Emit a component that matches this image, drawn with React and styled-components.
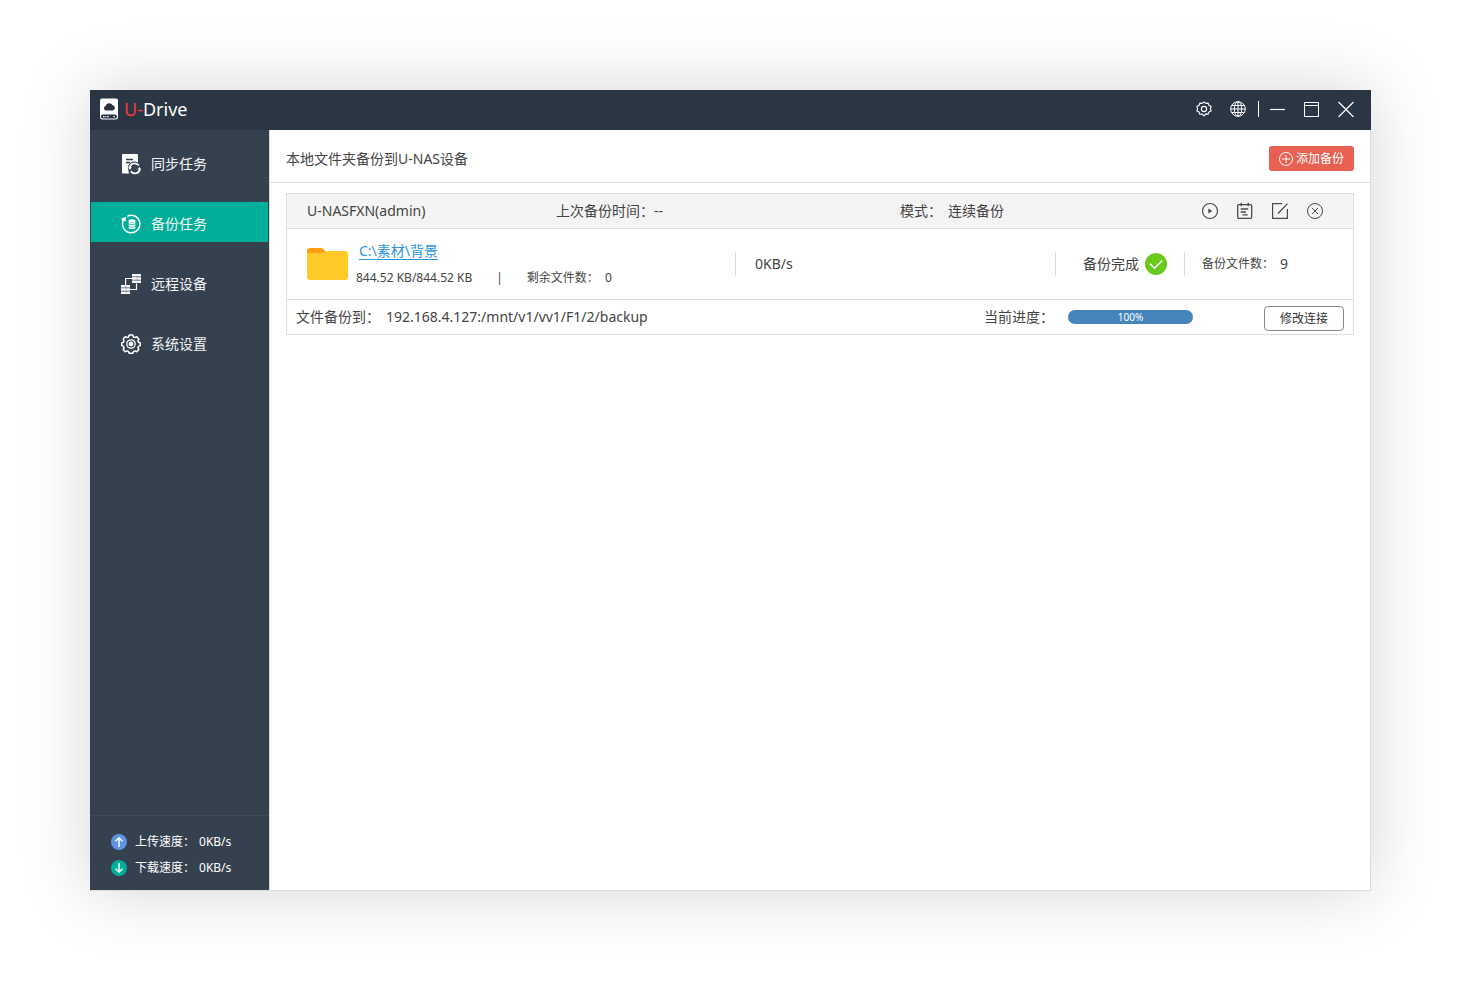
import styled, { createGlobalStyle } from "styled-components";

const menu = [
  { label: "同步任务", icon: <SyncIcon /> },
  { label: "备份任务", icon: <BackupIcon />, active: true },
  { label: "远程设备", icon: <DevicesIcon /> },
  { label: "系统设置", icon: <SettingsIcon /> },
];

const task = {
  device: "U-NASFXN(admin)",
  lastTime: "--",
  mode: "连续备份",
  source: "C:\\素材\\背景",
  size: "844.52 KB/844.52 KB",
  remaining: 0,
  speed: "0KB/s",
  files: 9,
  target: "192.168.4.127:/mnt/v1/vv1/F1/2/backup",
  progress: 100,
};

export default function App() {
  return (
    <>
      <GlobalStyle />
      <Desktop>
        <Window>
          <TitleBar />
          <Body>
            <Sidebar />
            <Main>
              <MainHeader>
                <h1>本地文件夹备份到U-NAS设备</h1>
                <AddButton type="button">
                  <AddIcon />
                  添加备份
                </AddButton>
              </MainHeader>
              <TaskList>
                <TaskCard {...task} />
              </TaskList>
            </Main>
          </Body>
        </Window>
      </Desktop>
    </>
  );
}

function TitleBar() {
  return (
    <TitleBarStyled>
      <LogoIcon />
      <Brand>
        <span>U-</span>Drive
      </Brand>
      <WindowActions>
        <IconButton type="button" aria-label="设置">
          <CogIcon />
        </IconButton>
        <IconButton type="button" aria-label="语言">
          <GlobeIcon />
        </IconButton>
        <WindowControls>
          <IconButton type="button" aria-label="最小化">
            <svg width="16" height="16" stroke="#fff">
              <path d="M0 8.500h15" strokeWidth="1.200" />
            </svg>
          </IconButton>
          <IconButton type="button" aria-label="最大化">
            <svg width="16" height="16" fill="none" stroke="#fff">
              <path d="M.5 1.500h14v14H.5zM.5 4.500h14" />
            </svg>
          </IconButton>
          <IconButton type="button" aria-label="关闭">
            <svg width="16" height="16" stroke="#fff">
              <path d="M.5 1l15 15M15.500 1l-15 15" strokeWidth="1.200" />
            </svg>
          </IconButton>
        </WindowControls>
      </WindowActions>
    </TitleBarStyled>
  );
}

function Sidebar() {
  return (
    <SidebarStyled>
      <nav>
        {menu.map(({ label, icon, active }) => (
          <MenuItem href="#" key={label} $active={active}>
            {icon}
            {label}
          </MenuItem>
        ))}
      </nav>
      <Speeds>
        <Speed>
          <ArrowIcon color="#5f93e4" path="M8 13V4M4.500 7.300L8 3.800l3.500 3.500" />
          上传速度：<span>0KB/s</span>
        </Speed>
        <Speed>
          <ArrowIcon color="#00ae99" path="M8 3v9M4.500 8.700L8 12.200l3.500-3.500" />
          下载速度：<span>0KB/s</span>
        </Speed>
      </Speeds>
    </SidebarStyled>
  );
}

function TaskCard(props) {
  return (
    <Card>
      <CardHead>
        <span>{props.device}</span>
        <span>上次备份时间：{props.lastTime}</span>
        <Pair>
          <span>模式：</span>
          <span>{props.mode}</span>
        </Pair>
        <CardActions>
          <IconButton type="button" aria-label="开始">
            <PlayIcon />
          </IconButton>
          <IconButton type="button" aria-label="日志">
            <LogIcon />
          </IconButton>
          <IconButton type="button" aria-label="编辑">
            <EditIcon />
          </IconButton>
          <IconButton type="button" aria-label="删除">
            <RemoveIcon />
          </IconButton>
        </CardActions>
      </CardHead>

      <CardBody>
        <Source>
          <FolderIcon />
          <div>
            <a href="#">{props.source}</a>
            <Details>
              <span>{props.size}</span>
              <span>|</span>
              <Pair>
                <span>剩余文件数：</span>
                <span>{props.remaining}</span>
              </Pair>
            </Details>
          </div>
        </Source>
        <Cell $indent={19}>{props.speed}</Cell>
        <Cell $indent={27}>
          备份完成
          <DoneIcon />
        </Cell>
        <Cell $indent={17}>
          <small>备份文件数：</small>
          {props.files}
        </Cell>
      </CardBody>

      <CardFoot>
        <Pair>
          <span>文件备份到：</span>
          <span>{props.target}</span>
        </Pair>
        <ProgressGroup>
          <span id="progress-label">当前进度：</span>
          <Track
            role="progressbar"
            aria-labelledby="progress-label"
            aria-valuenow={props.progress}
          >
            <Fill style={{ width: `${props.progress}%` }}>{props.progress}%</Fill>
          </Track>
        </ProgressGroup>
        <EditButton type="button">修改连接</EditButton>
      </CardFoot>
    </Card>
  );
}

function LogoIcon() {
  return (
    <svg width="18" height="22" viewBox="0 0 18 22">
      <path fill="#fff" d="M2 .5h14a2 2 0 0 1 2 2V19a2.500 2.500 0 0 1-2.500 2.500h-13A2.500 2.500 0 0 1 0 19V2.500a2 2 0 0 1 2-2z" />
      <path
        fill="#2b3644"
        d="M6 12.500a2.300 2.300 0 0 1-.4-4.500 3.800 3.800 0 0 1 7-.8A2.700 2.700 0 0 1 12.800 12.500z"
      />
      <rect x="1" y="16.600" width="16" height="4" rx="1.800" fill="#2b3644" />
      <path stroke="#fff" strokeWidth="1.400" d="M3 18.600h1.500M5.300 18.600h1M7.300 18.600h1.500M13.500 18.600h1.500" />
    </svg>
  );
}

function SyncIcon() {
  return (
    <svg width="20" height="22" viewBox="0 0 20 22">
      <path fill="#fff" d="M2 1h14a1 1 0 0 1 1 1v7.600a6.400 6.400 0 0 0-9.900 6.400L8 20.500H2a1 1 0 0 1-1-1V2a1 1 0 0 1 1-1z" />
      <path stroke="#364150" strokeWidth="1.300" d="M5 6.500h7M5 9.500h4" />
      <path
        fill="none"
        stroke="#fff"
        strokeWidth="1.700"
        d="M8.600 14.600a5.100 5.100 0 0 1 9.200-2M19 16a5.100 5.100 0 0 1-9.200 2.200"
      />
      <path fill="#fff" d="M7 14.300h4l-2.200 2.400zM20.300 16.500h-4.100l2.300-2.500z" />
    </svg>
  );
}

function BackupIcon() {
  return (
    <svg width="20" height="20" viewBox="0 0 20 20">
      <path fill="none" stroke="#fff" strokeWidth="1.500" d="M6.300 2.300A8.700 8.700 0 1 1 2.300 6.500" />
      <path fill="#fff" d="M.2 4.600L5 3.100 4.600 7.700 3.200 6.600 1.500 8.300z" />
      <ellipse cx="11" cy="6.700" rx="3.600" ry="1.500" fill="#fff" />
      <path
        fill="none"
        stroke="#fff"
        strokeWidth="1.600"
        strokeLinecap="round"
        d="M8.200 8.800q2.800 1.500 5.600 0M8.200 11.200q2.800 1.500 5.600 0M8.200 13.600q2.800 1.500 5.600 0"
      />
    </svg>
  );
}

function DevicesIcon() {
  return (
    <svg width="20" height="22" viewBox="0 0 20 22">
      <path fill="none" stroke="#fff" strokeWidth="1.200" d="M11 5.500H4.600V12M9 16.500h6.500v-6" />
      <path fill="#fff" d="M11 1h9v2.500h-9zM11 4.300h9v2.400h-9zM11 7.500h9V10h-9zM0 12h9v2.500H0zM0 15.300h9v2.400H0zM0 18.500h9V21H0z" />
      <path stroke="#364150" strokeWidth=".8" d="M16 1v9M5 12v9" opacity=".3" />
    </svg>
  );
}

function SettingsIcon() {
  return (
    <svg width="20" height="20" viewBox="0 0 20 20" fill="none" stroke="#fff">
      <path
        strokeWidth="1.500"
        strokeLinejoin="round"
        d="M8.200 1h3.600l.7 2 1.200.5 2.100-.8 2 2.200-.8 2 .6 1.300 1.700.8v2.400l-1.700.9-.6 1.300.8 2-2.100 2.100-2-.8-1.200.5-.7 1.900H8.200l-.7-1.900-1.200-.5-2.100.8-2-2.100.8-2-.6-1.300-1.700-.9V9l1.700-.8.6-1.300-.8-2 2-2.200 2.100.8L7.500 3z"
      />
      <circle cx="10" cy="10" r="4.200" strokeWidth="1.300" />
      <circle cx="10" cy="10" r="2.400" fill="#fff" stroke="none" />
    </svg>
  );
}

function ArrowIcon({ color, path }) {
  return (
    <svg width="16" height="16" viewBox="0 0 16 16" fill="none">
      <circle cx="8" cy="8" r="8" fill={color} />
      <path stroke="#fff" strokeWidth="1.400" d={path} />
    </svg>
  );
}

function CogIcon() {
  return (
    <svg width="16" height="16" viewBox="0 0 16 16" fill="none" stroke="#fff">
      <path
        strokeWidth="1.100"
        strokeLinejoin="round"
        d="M8 .9l1.800 1.500 2.400-.3.700 2.200 2.200 1-.7 2.200.7 2.400-2.100 1-.8 2.200-2.400-.2L8 14.900l-1.800-1.800-2.400.2-.8-2.200-2.100-1 .7-2.400-.7-2.400 2.200-1 .7-2.200 2.400.3z"
      />
      <circle cx="8" cy="8" r="2.600" strokeWidth="1.100" />
    </svg>
  );
}

function GlobeIcon() {
  return (
    <svg width="16" height="16" viewBox="0 0 16 16" fill="none" stroke="#fff">
      <circle cx="8" cy="8" r="7.300" />
      <ellipse cx="8" cy="8" rx="3.700" ry="7.300" />
      <path d="M8 .7v14.600M.7 8h14.600M1.600 4.500h12.800M1.600 11.500h12.800" />
    </svg>
  );
}

function AddIcon() {
  return (
    <svg width="14" height="14" viewBox="0 0 14 14" fill="none" stroke="#fff">
      <circle cx="7" cy="7" r="6.500" />
      <path d="M7 3v8M3 7h8" />
    </svg>
  );
}

function PlayIcon() {
  return (
    <svg width="18" height="18" viewBox="0 0 18 18">
      <circle cx="9" cy="9" r="7.500" fill="none" stroke="#4a4a4a" strokeWidth="1.200" />
      <path fill="#4a4a4a" d="M7.300 6.500L11.300 9l-4 2.500z" />
    </svg>
  );
}

function LogIcon() {
  return (
    <svg width="18" height="18" viewBox="0 0 18 18" fill="none" stroke="#4a4a4a" strokeWidth="1.300">
      <rect x="1.700" y="2.600" width="14" height="13.700" rx="1.200" />
      <path d="M5.200.7v3.600M12.200.7v3.600M4.700 7h7.500M4.700 10h5.300M6.500 12.800h5.200" />
    </svg>
  );
}

function EditIcon() {
  return (
    <svg width="18" height="18" viewBox="0 0 18 18" fill="none" stroke="#4a4a4a" strokeWidth="1.200">
      <path d="M11 1.600H1.600v14.800h14.800V7M7 11.500L16.500 1.600" />
    </svg>
  );
}

function RemoveIcon() {
  return (
    <svg width="18" height="18" viewBox="0 0 18 18" fill="none" stroke="#4a4a4a">
      <circle cx="9" cy="9" r="7.500" />
      <path d="M6 6l6 6M12 6l-6 6" />
    </svg>
  );
}

function FolderIcon() {
  return (
    <svg width="41" height="34" viewBox="0 0 41 34">
      <path fill="#ff9f0f" d="M3 1h11q1.500 0 2.500 1.200L19 5v6H0V4a3 3 0 0 1 3-3z" />
      <path fill="#ffc928" d="M0 6h15q2 0 3-1t3-1h17a3 3 0 0 1 3 3v23a3 3 0 0 1-3 3H3a3 3 0 0 1-3-3z" />
    </svg>
  );
}

function DoneIcon() {
  return (
    <svg width="22" height="22" viewBox="0 0 22 22" fill="none">
      <circle cx="11" cy="11" r="11" fill="#6bc91c" />
      <path stroke="#fff" strokeWidth="1.500" d="M5 10.800l4.500 4.500L17.200 7.500" />
    </svg>
  );
}

const GlobalStyle = createGlobalStyle`
  * {
    box-sizing: border-box;
  }
  body {
    margin: 0;
    background: #fff;
    color: #444;
    font-family: "Noto Sans", "Noto Sans CJK SC", sans-serif;
    font-size: 14px;
    line-height: 20px;
  }
  button {
    font: inherit;
    cursor: pointer;
  }
  svg {
    display: block;
    flex-shrink: 0;
  }
`;

const Desktop = styled.div`
  display: flex;
  min-height: 100vh;
  padding: 90px;
`;

const Window = styled.div`
  flex: 1;
  display: flex;
  flex-direction: column;
  min-width: 0;
  background: #fff;
  box-shadow: 0 0 64px rgba(0, 0, 0, 0.17);
`;

const TitleBarStyled = styled.header`
  display: flex;
  align-items: center;
  gap: 6px;
  height: 40px;
  padding: 0 17px 2px 10px;
  background: #2b3644;
  color: #fff;
`;

const Brand = styled.div`
  font-size: 18px;

  span {
    color: #f03c40;
  }
`;

const WindowActions = styled.div`
  display: flex;
  gap: 18px;
  margin-left: auto;
`;

const WindowControls = styled.div`
  display: flex;
  gap: 18px;
  margin-left: -6px;
  padding-left: 11px;
  border-left: 1px solid #fff;
`;

const IconButton = styled.button`
  padding: 0;
  border: none;
  background: none;
`;

const Body = styled.div`
  flex: 1;
  display: flex;
`;

const SidebarStyled = styled.aside`
  display: flex;
  flex-direction: column;
  justify-content: space-between;
  width: 179px;
  border-bottom: 1px solid #dcdcdc;
  background: #364150;
  color: #fff;

  nav {
    display: flex;
    flex-direction: column;
    gap: 20px;
    padding: 12px 1px;
  }
`;

const MenuItem = styled.a`
  display: flex;
  align-items: center;
  gap: 10px;
  height: 40px;
  padding: 4px 0 0 30px;
  background: ${({ $active }) => ($active ? "#00ae99" : "transparent")};
  color: #f2f3f4;
  text-decoration: none;
`;

const Speeds = styled.div`
  display: flex;
  flex-direction: column;
  gap: 6px;
  padding: 16px 21px 12px;
  border-top: 1px solid #3f4b5b;
`;

const Speed = styled.div`
  display: flex;
  align-items: center;
  font-size: 12px;

  svg {
    margin-right: 8px;
  }
  span {
    margin-left: 4px;
  }
`;

const Main = styled.main`
  flex: 1;
  min-width: 0;
  border: 1px solid #dcdcdc;
  border-top: none;
`;

const MainHeader = styled.div`
  display: flex;
  align-items: center;
  justify-content: space-between;
  height: 53px;
  padding: 4px 16px 0;
  border-bottom: 1px solid #dcdcdc;

  h1 {
    margin: 0;
    padding-top: 2px;
    font-size: 14px;
    font-weight: 400;
  }
`;

const AddButton = styled.button`
  display: flex;
  align-items: center;
  gap: 3px;
  height: 25px;
  padding: 2px 10px 0;
  border: none;
  border-radius: 3px;
  background: #e86051;
  color: #fff;
  font-size: 12px;
`;

const TaskList = styled.div`
  padding: 10px 16px;
`;

const Card = styled.section`
  border: 1px solid #dcdcdc;
`;

const CardHead = styled.div`
  display: grid;
  grid-template-columns: 249fr 344fr 301fr auto;
  align-items: center;
  height: 35px;
  padding: 0 29px 0 20px;
  border-bottom: 1px solid #dcdcdc;
  background: #f4f4f4;
`;

const CardActions = styled.div`
  display: flex;
  gap: 17px;
`;

const Pair = styled.div`
  display: flex;
  gap: 6px;
`;

const CardBody = styled.div`
  display: grid;
  grid-template-columns: 448fr 320fr 129fr 169fr;
  align-items: center;
  height: 71px;
  border-bottom: 1px solid #dcdcdc;
`;

const Source = styled.div`
  display: flex;
  align-items: center;
  gap: 8px;
  padding-left: 20px;

  a {
    margin-left: 3px;
    color: #2f95dc;
    text-underline-offset: 3px;
  }
`;

const Details = styled.div`
  display: flex;
  gap: 24px;
  padding-top: 7px;
  font-size: 12px;
`;

const Cell = styled.div`
  display: flex;
  align-items: center;
  gap: 6px;
  height: 24px;
  padding-left: ${({ $indent }) => $indent}px;
  border-left: 1px solid #dcdcdc;

  small {
    font-size: 12px;
  }
`;

const CardFoot = styled.div`
  display: flex;
  align-items: center;
  height: 34px;
  padding: 0 9px;
`;

const ProgressGroup = styled.div`
  display: flex;
  align-items: center;
  gap: 14px;
  margin: 0 71px 0 auto;
`;

const Track = styled.div`
  width: 125px;
  border-radius: 7px;
  background: #e4e4e4;
`;

const Fill = styled.div`
  height: 14px;
  border-radius: 7px;
  background: #4685bc;
  color: #fff;
  font-size: 10px;
  line-height: 14px;
  text-align: center;
`;

const EditButton = styled.button`
  width: 80px;
  height: 25px;
  margin-top: 2px;
  padding: 2px 0 0;
  border: 1px solid #888;
  border-radius: 4px;
  background: #fff;
  color: #333;
  font-size: 12px;
`;
